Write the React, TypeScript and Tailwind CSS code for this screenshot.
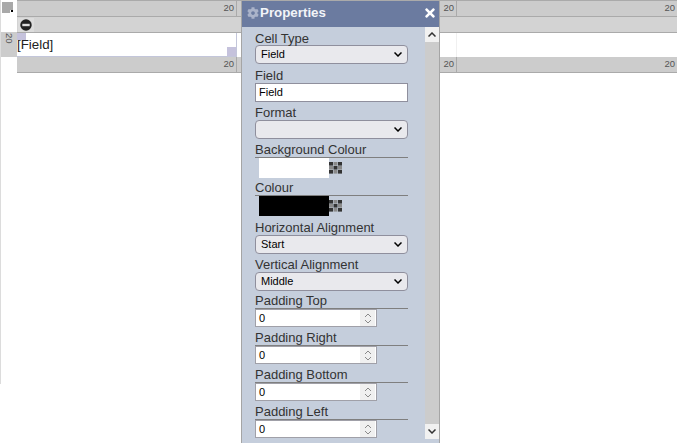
import { FaCog, FaTimes } from "react-icons/fa";

const Chevron = ({ up = false }: { up?: boolean }) => (
  <svg width="8" height="5" viewBox="0 0 8 5" fill="none" stroke="currentColor" strokeWidth="1.5">
    <path d={up ? "M0.5 4.5 L4 1 L7.5 4.5" : "M0.5 0.5 L4 4 L7.5 0.5"} />
  </svg>
);

const Label = ({ text, line = false, h = "h-[15px]" }: { text: string; line?: boolean; h?: string }) => (
  <div className={`leading-[15px] text-[13px] text-[#333] ${line ? "h-[16px] border-b border-[#7f7f7f]" : h}`}>{text}</div>
);

const Select = ({ value, mb }: { value: string; mb: string }) => (
  <div className={`h-[19px] flex items-center justify-between bg-[#e9e9ed] border border-[#8f8f9d] rounded-[4px] pl-[5px] pr-[5px] text-[11px] text-black ${mb}`}>
    <span>{value}</span>
    <Chevron />
  </div>
);

const Swatch = ({ colour, mb }: { colour: string; mb: string }) => (
  <div className={`flex items-center pl-[4px] ${mb}`}>
    <div className={`w-[70px] h-[20px] ${colour}`} />
    <svg width="13" height="12" viewBox="0 0 13 12">
      {[0, 1, 2].map((r) =>
        [0, 1, 2].map((c) => (
          <rect key={`${r}-${c}`} x={c * 4.5} y={r * 4} width="4" height="3.6" fill={(r + c) % 2 === 0 ? "#333" : "#8a8a8a"} />
        ))
      )}
    </svg>
  </div>
);

const NumberField = ({ label }: { label: string }) => (
  <div className="mb-[3px]">
    <Label text={label} line />
    <div className="w-[122px] h-[18px] flex items-center justify-between bg-white border border-[#a0a0a8] pl-[3px] text-[11px] text-black">
      <span>0</span>
      <div className="w-[15px] h-[16px] mr-px bg-[#f0f0f0] flex flex-col items-center justify-center gap-px text-[#8a8a8a]">
        <svg width="8" height="5" viewBox="0 0 8 5" fill="none" stroke="currentColor"><path d="M1 4 L4 1 L7 4" /></svg>
        <svg width="8" height="5" viewBox="0 0 8 5" fill="none" stroke="currentColor"><path d="M1 1 L4 4 L7 1" /></svg>
      </div>
    </div>
  </div>
);

const Width = ({ w, last = false }: { w: string; last?: boolean }) => (
  <div className={`${w} h-full text-right pr-[2px] text-[9.5px] leading-[14px] text-[#555] ${last ? "" : "border-r border-[#aaa]"}`}>
    20
  </div>
);

const WidthRow = () => (
  <div className="h-[16px] flex bg-[#cccccc] border-b border-[#aaa]">
    <Width w="w-[220px]" />
    <Width w="w-[220px]" />
    <Width w="w-[220px]" last />
  </div>
);

export default function App() {
  return (
    <div className="relative w-[678px] h-[443px] overflow-hidden bg-white font-['Liberation_Sans',Arial,sans-serif]">
      <div className="flex h-[384px] border-l border-[#dcdcdc]">
        <div className="w-[16px] flex flex-col shrink-0">
          <div className="h-[32px] pt-[2px] pl-px">
            <div className="relative w-[11px] h-[11px] bg-[#a9a9a9]">
              <div className="absolute right-0 bottom-0 w-[3px] h-[3px] bg-white" />
              <div className="absolute right-0 bottom-px w-[2px] h-[2px] bg-black" />
            </div>
          </div>
          <div className="h-[25px] bg-[#cccccc] flex justify-center pt-px">
            <span className="text-[9.5px] leading-[14px] h-[12px] text-[#555] [writing-mode:vertical-rl]">20</span>
          </div>
        </div>
        <div className="w-[660px]">
          <div className="h-px bg-[#aaa]" />
          <WidthRow />
          <div className="h-[16px] bg-[#d3d3d3] border-b border-[#aaa] pl-px flex items-center">
            <div className="w-[16px] h-[14px] bg-[#dcdcdc] flex items-center justify-center">
              <svg width="12" height="12" viewBox="0 0 13 13">
                <circle cx="6.5" cy="6.5" r="6.2" fill="#222" />
                <rect x="2.5" y="5.2" width="8" height="2.6" fill="#ddd" />
              </svg>
            </div>
          </div>
          <div className="h-[24px] flex">
            <div className="relative w-[220px] border-r border-b border-[#c3c6da] text-[13.33px] leading-[24px] text-[#222]">
              [Field]
              <div className="absolute left-0 top-0 w-[9px] h-[7px] bg-[#c5c2dc]" />
              <div className="absolute right-0 bottom-0 w-[9px] h-[9px] bg-[#c5c2dc]" />
            </div>
            <div className="w-[220px] border-r border-[#f0f0f0]" />
          </div>
          <WidthRow />
        </div>
      </div>

      {/* Properties panel */}
      <div className="absolute left-[241px] top-px w-[199px] h-[442px] flex flex-col bg-[#c5cedc] border-l border-r border-[#a5a5a5]">
        <div className="h-[26px] shrink-0 flex items-center justify-between bg-[#6b7ba0] pl-[5px] pr-[2px] pb-[2px]">
          <div className="flex items-center gap-px">
            <FaCog className="text-[#aab3c9]" size={12} />
            <span className="text-[13.33px] font-bold text-[#f2f4f8]">Properties</span>
          </div>
          <FaTimes className="text-white mb-px" size={14} />
        </div>
        <div className="flex-1 flex min-h-0">
          <div className="flex-1 pl-[13px] pr-[17px] pt-[4px]">
            <Label text="Cell Type" h="h-[14px]" />
            <Select value="Field" mb="mb-[4px]" />
            <Label text="Field" />
            <div className="h-[19px] flex items-center bg-white border border-[#8f8f9d] pl-[3px] text-[11px] text-black mb-[3px]">Field</div>
            <Label text="Format" />
            <Select value="" mb="mb-[3px]" />
            <Label text="Background Colour" line />
            <Swatch colour="bg-white" mb="mb-[2px]" />
            <Label text="Colour" line />
            <Swatch colour="bg-black" mb="mb-[4px]" />
            <Label text="Horizontal Alignment" />
            <Select value="Start" mb="mb-[3px]" />
            <Label text="Vertical Alignment" />
            <Select value="Middle" mb="mb-[2px]" />
            <NumberField label="Padding Top" />
            <NumberField label="Padding Right" />
            <NumberField label="Padding Bottom" />
            <NumberField label="Padding Left" />
          </div>
          <div className="w-[14px] mb-[4px] flex flex-col justify-between bg-[#cccccc]">
            <div className="h-[15px] bg-[#f1f1f1] flex items-center justify-center text-[#333]"><Chevron up /></div>
            <div className="h-[15px] bg-[#f1f1f1] flex items-center justify-center text-[#333]"><Chevron /></div>
          </div>
        </div>
      </div>
    </div>
  );
}
